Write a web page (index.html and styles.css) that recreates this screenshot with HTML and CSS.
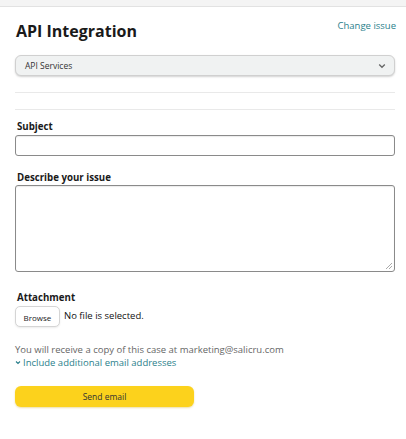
FILE: index.html
```html
<!DOCTYPE html>
<html lang="en">
<head>
<meta charset="utf-8">
<link rel="stylesheet" href="styles.css">
</head>
<body>
<div class="topbar"></div>
<main class="panel">
  <div class="head">
    <h1 class="title">API Integration</h1>
    <a class="link change">Change issue</a>
  </div>
  <div class="select">
    <span>API Services</span>
    <svg class="chev" width="8" height="6" viewBox="0 0 8 6"><path d="M1.2 1.5 L4 4.3 L6.8 1.5" fill="none" stroke="#666" stroke-width="1.3"/></svg>
  </div>
  <div class="rule r1"></div>
  <div class="rule r2"></div>
  <label class="label l-subject">Subject</label>
  <div class="input"></div>
  <label class="label l-desc">Describe your issue</label>
  <div class="textarea">
    <svg class="grip" width="8" height="8" viewBox="0 0 8 8"><path d="M7 1 L1 7 M7 4 L4 7" stroke="#aaa" stroke-width="1"/></svg>
  </div>
  <label class="label l-att">Attachment</label>
  <div class="file">
    <span class="browse">Browse</span>
    <span class="nofile">No file is selected.</span>
  </div>
  <p class="copy">You will receive a copy of this case at marketing@salicru.com</p>
  <p class="include"><svg class="tri" width="6" height="5" viewBox="0 0 6 5"><path d="M1 1.5 L3 3.5 L5 1.5" fill="none" stroke="#2b7f8c" stroke-width="1.1"/></svg><span>Include additional email addresses</span></p>
  <div class="send">Send email</div>
</main>
</body>
</html>
```
FILE: styles.css
```css
* { box-sizing: border-box; }
html, body { margin: 0; padding: 0; background: #fff; }
body { font-family: "Open Sans", "Noto Sans", sans-serif; color: #111; width: 406px; height: 439px; overflow: hidden; }
.topbar { height: 7px; background: #f4f4f4; border-bottom: 1px solid #e2e2e2; }
.panel { padding: 0 11px 0 15px; display: flex; flex-direction: column; }
.head { display: flex; justify-content: space-between; align-items: flex-start; margin-top: 12px; height: 36px; }
.title { margin: 0 0 0 1px; font-size: 16px; font-weight: 700; line-height: 24px; color: #1a1a1a; letter-spacing: 0; }
.link { color: #2b7f8c; font-size: 9.5px; line-height: 14px; }
.change { margin-top: 0; margin-right: -1px; }
.select { height: 21px; border: 1px solid #d0d0d0; border-radius: 6px; background: #f0f2f2; box-shadow: 0 1px 2px rgba(0,0,0,0.18); display: flex; align-items: center; justify-content: space-between; padding: 0 8px 0 9px; font-size: 8.5px; color: #333; }
.chev { margin-top: 1px; }
.rule { height: 1px; background: #e9e9e9; }
.r1 { margin-top: 16px; }
.r2 { margin-top: 16px; }
.label { font-size: 9.7px; font-weight: 700; line-height: 13px; color: #1a1a1a; margin-left: 2px; }
.l-subject { margin-top: 10px; }
.input { margin-top: 2px; height: 21px; border: 1px solid #8a8a8a; border-radius: 3px; box-shadow: inset 0 1px 1px rgba(0,0,0,0.08); }
.l-desc { margin-top: 15px; }
.textarea { margin-top: 1px; height: 87px; border: 1px solid #8a8a8a; border-radius: 3px; position: relative; box-shadow: inset 0 1px 1px rgba(0,0,0,0.08); }
.grip { position: absolute; right: 1px; bottom: 1px; }
.l-att { margin-top: 19px; }
.file { margin-top: 2px; display: flex; align-items: center; gap: 4px; }
.browse { height: 21px; width: 45px; border: 1px solid #d5d5d5; border-radius: 5px; background: #fff; display: flex; align-items: center; justify-content: center; font-size: 8px; color: #222; box-shadow: 0 1px 2px rgba(0,0,0,0.08); padding-top: 2px; }
.nofile { font-size: 9.5px; color: #111; margin-top: -3px; }
.copy { margin: 16px 0 0; font-size: 9.5px; line-height: 13px; color: #666; }
.include { margin: 0; font-size: 9.5px; line-height: 13px; color: #2b7f8c; display: flex; align-items: center; gap: 2px; }
.tri { margin-left: 0; }
.send { margin-top: 17px; width: 179px; height: 21px; border-radius: 6px; background: #fcd21c; box-shadow: 0 1px 2px rgba(200,160,0,0.35); display: flex; align-items: center; justify-content: center; font-size: 8.5px; color: #333; }
```
